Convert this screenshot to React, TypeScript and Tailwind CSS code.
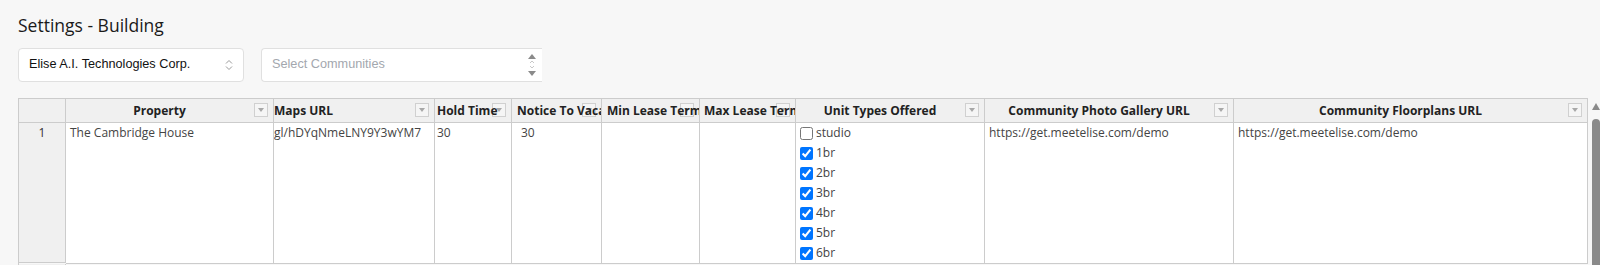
import React from 'react';

const cols = [
  { key: 'property', title: 'Property', align: 'center', hpad: '' },
  { key: 'maps', title: 'Maps URL', align: 'left', hpad: 'pl-[0px]' },
  { key: 'hold', title: 'Hold Time', align: 'left', hpad: 'pl-[2px]' },
  { key: 'notice', title: 'Notice To Vacate', align: 'left', hpad: 'pl-[5px]' },
  { key: 'min', title: 'Min Lease Term', align: 'left', hpad: 'pl-[5px]' },
  { key: 'max', title: 'Max Lease Term', align: 'left', hpad: 'pl-[4px]' },
  { key: 'units', title: 'Unit Types Offered', align: 'center', hpad: '' },
  { key: 'photo', title: 'Community Photo Gallery URL', align: 'center', hpad: '' },
  { key: 'floor', title: 'Community Floorplans URL', align: 'center', hpad: '' },
];

const unitTypes = [
  { label: 'studio', checked: false },
  { label: '1br', checked: true },
  { label: '2br', checked: true },
  { label: '3br', checked: true },
  { label: '4br', checked: true },
  { label: '5br', checked: true },
  { label: '6br', checked: true },
];

const gridCols =
  'grid grid-cols-[47px_208px_161px_77px_90px_98px_96px_189px_249px_354px]';

function FilterButton() {
  return (
    <div className="absolute right-[5px] top-[4px] flex h-[14px] w-[14px] items-center justify-center border border-[#d0d0d0] bg-[#f5f5f5]">
      <div className="h-0 w-0 border-x-[3px] border-t-[4px] border-x-transparent border-t-[#a8a8a8]" />
    </div>
  );
}

export default function App() {
  return (
    <div
      className="h-[265px] overflow-hidden bg-[#f7f7f7] pl-[18px] pt-[13px]"
      style={{ fontFamily: '"Open Sans", sans-serif' }}
    >
      <h1 className="text-[17.5px] leading-[24px] text-[#1a1a1a]">Settings - Building</h1>

      {/* selectors */}
      <div
        className="mt-[11px] flex gap-[17px] text-[12.7px]"
        style={{ fontFamily: '"Liberation Sans", Arial, sans-serif' }}
      >
        <div className="flex h-[34px] w-[226px] items-center justify-between rounded-[4px] border border-[#e0e0e0] bg-white pl-[10px] pr-[10px] text-[#111]">
          <span>Elise A.I. Technologies Corp.</span>
          <svg width="8" height="12" viewBox="0 0 8 12" fill="none" stroke="#9a9a9a" strokeWidth="1">
            <path d="M1 4.5 L4 1.5 L7 4.5" />
            <path d="M1 7.5 L4 10.5 L7 7.5" />
          </svg>
        </div>
        <div className="flex h-[34px] w-[281px] items-center justify-between rounded-l-[4px] border border-r-0 border-[#e0e0e0] bg-white pl-[10px] pr-[5px] text-[#a3a7ae]">
          <span>Select Communities</span>
          <svg width="10" height="24" viewBox="0 0 10 24">
            <path d="M1 6 L5 1 L9 6 Z" fill="#8a8a8a" />
            <path d="M3 10 L5 8 L7 10" stroke="#c8c8c8" strokeWidth="1" fill="none" />
            <path d="M3 13 L5 15 L7 13" stroke="#c8c8c8" strokeWidth="1" fill="none" />
            <path d="M1 18 L9 18 L5 23 Z" fill="#8a8a8a" />
          </svg>
        </div>
      </div>

      {/* grid */}
      <div className="mt-[16px] flex">
        <div className="border-l border-t border-[#cccccc] text-[12px]">
          <div className={`${gridCols} bg-[#f0f0f0]`}>
            <div className="h-[24px] border-b border-r border-[#cccccc]" />
            {cols.map((c) => (
              <div
                key={c.key}
                className="relative h-[24px] overflow-hidden whitespace-nowrap border-b border-r border-[#cccccc] font-bold leading-[23px] text-[#222]"
              >
                <FilterButton />
                <div
                  className={
                    c.align === 'center'
                      ? 'relative pr-[20px] text-center'
                      : `relative text-left ${c.hpad}`
                  }
                >
                  {c.title}
                </div>
              </div>
            ))}
          </div>

          <div className={`${gridCols} leading-[20px] text-[#444]`}>
            <div className="h-[140px] border-b border-r border-[#cccccc] bg-[#f0f0f0] text-center text-[#333]">
              1
            </div>
            <div className="border-b border-r border-[#cccccc] bg-white pl-[4px]">The Cambridge House</div>
            <div className="overflow-hidden whitespace-nowrap border-b border-r border-[#cccccc] bg-white">
              gl/hDYqNmeLNY9Y3wYM7
            </div>
            <div className="border-b border-r border-[#cccccc] bg-white pl-[2px]">30</div>
            <div className="border-b border-r border-[#cccccc] bg-white pl-[9px]">30</div>
            <div className="border-b border-r border-[#cccccc] bg-white" />
            <div className="border-b border-r border-[#cccccc] bg-white" />
            <div className="flex flex-col border-b border-r border-[#cccccc] bg-white pl-[4px]">
              {unitTypes.map((u) => (
                <label key={u.label} className="flex h-[20px] items-center gap-[3px]">
                  <input
                    type="checkbox"
                    checked={u.checked}
                    readOnly
                    className="m-0 h-[13px] w-[13px] accent-[#0075ff]"
                  />
                  <span>{u.label}</span>
                </label>
              ))}
            </div>
            <div className="border-b border-r border-[#cccccc] bg-white pl-[4px]">
              https://get.meetelise.com/demo
            </div>
            <div className="border-b border-r border-[#cccccc] bg-white pl-[4px]">
              https://get.meetelise.com/demo
            </div>
          </div>

          <div className={`${gridCols}`}>
            <div className="h-[24px] border-r border-[#cccccc] bg-[#f0f0f0]" />
          </div>
        </div>

        {/* vertical scrollbar */}
        <div className="ml-[4px] flex w-[8px] flex-col items-center">
          <div className="mt-[5px] h-0 w-0 border-x-[4px] border-b-[7px] border-x-transparent border-b-[#8a8a8a]" />
          <div className="mt-[9px] h-[160px] w-[8px] rounded-t-[4px] bg-[#8a8a8a]" />
        </div>
      </div>
    </div>
  );
}
